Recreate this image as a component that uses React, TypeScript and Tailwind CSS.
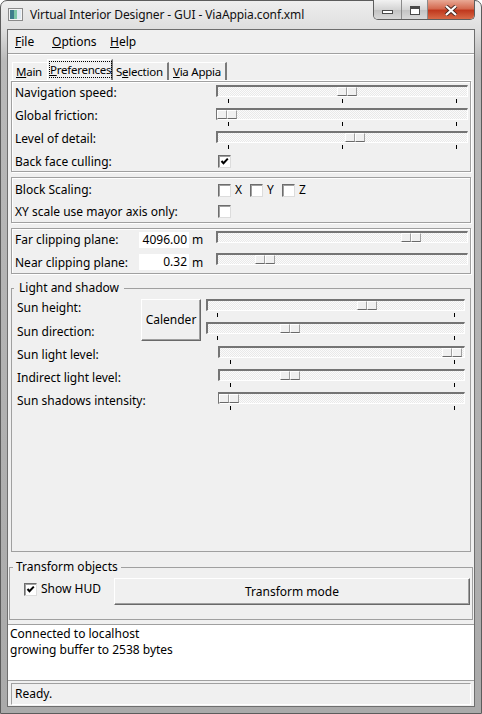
import React from "react";

const knob =
  "h-[9px] w-[10px] bg-[#f0f0f0] border border-t-white border-l-white border-b-[#696969] border-r-[#a0a0a0]";

type SliderProps = {
  w: string;
  thumb: string;
  ticks?: number;
  tickPad?: string;
  mt?: string;
};

function Slider({ w, thumb, ticks = 0, tickPad = "", mt = "mt-[2px]" }: SliderProps) {
  return (
    <div className={`${w} ${mt} shrink-0`}>
      <div className="flex h-[12px] border-t-2 border-l-2 border-b border-r border-t-[#747474] border-l-[#747474] border-b-white border-r-white bg-[conic-gradient(#fbfbfb_25%,#e9e9e9_0_50%,#fbfbfb_0_75%,#e9e9e9_0)] bg-[length:2px_2px]">
        <div className={`${thumb} flex shrink-0`}>
          <div className={knob} />
          <div className={knob} />
        </div>
      </div>
      {ticks > 0 && (
        <div className={`flex justify-between mt-[2px] ${tickPad}`}>
          {Array.from({ length: ticks }).map((_, i) => (
            <div key={i} className="w-px h-[4px] bg-black" />
          ))}
        </div>
      )}
    </div>
  );
}

function Check({ checked }: { checked?: boolean }) {
  return (
    <div className="w-[13px] h-[13px] shrink-0 bg-white border border-t-[#6d6d6d] border-l-[#6d6d6d] border-b-[#dcdcdc] border-r-[#dcdcdc] shadow-[inset_1px_1px_0_#a0a0a0] flex items-center justify-center">
      {checked && (
        <svg width="9" height="9" viewBox="0 0 9 9">
          <path d="M1.5 4 L3.5 6.2 L7.8 1.6" stroke="#000" strokeWidth="2" fill="none" />
        </svg>
      )}
    </div>
  );
}

const raised =
  "bg-[#f0f0f0] border border-t-white border-l-white border-b-[#696969] border-r-[#696969] shadow-[inset_-1px_-1px_0_#a0a0a0]";

const etched = "border border-[#a0a0a0] shadow-[inset_1px_1px_0_#fff,1px_1px_0_#fff]";

export default function App() {
  return (
    <div className="font-['Segoe_UI','Noto_Sans',sans-serif] text-[12px] text-black w-[482px] h-[714px] flex flex-col px-[6px] pb-[6px] rounded-t-[7px] border border-[#5c5c5c] bg-[linear-gradient(180deg,#eeeeee_0px,#dedede_29px,#b9b9b9_60px,#aaaaaa_100%)]">
      {/* title bar */}
      <div className="h-[28px] flex items-start shrink-0">
        <div className="flex items-center h-full">
          <svg width="15" height="13" viewBox="0 0 15 13" className="ml-[1px] -mt-[1px]">
            <rect x="0.5" y="0.5" width="14" height="12" fill="#f4f4f4" stroke="#8a8a8a" />
            <rect x="2" y="2" width="4" height="9" fill="#3f7d8c" />
            <rect x="6" y="2" width="3" height="9" fill="#7fc6a8" />
            <rect x="9" y="2" width="4" height="9" fill="#dfe9f2" />
          </svg>
          <span className="ml-[7px] -mt-[1px] text-[#111] tracking-[-0.1px]">Virtual Interior Designer - GUI - ViaAppia.conf.xml</span>
        </div>
        <div className="ml-auto flex h-[20px] -mt-px border border-t-0 border-[#5e5e5e] rounded-b-[5px] overflow-hidden">
          <div className="w-[28px] flex items-center justify-center bg-[linear-gradient(180deg,#f2f2f2,#d4d4d4_50%,#c2c2c2_51%,#d8d8d8)] border-r border-[#8a8a8a]">
            <div className="w-[11px] h-[4px] mt-[4px] bg-white border border-[#4a4a4a]" />
          </div>
          <div className="w-[26px] flex items-center justify-center bg-[linear-gradient(180deg,#f2f2f2,#d4d4d4_50%,#c2c2c2_51%,#d8d8d8)] border-r border-[#8a8a8a]">
            <div className="w-[10px] h-[9px] bg-white border border-[#4a4a4a] border-t-[3px] mt-[1px]" />
          </div>
          <div className="w-[46px] flex items-center justify-center bg-[linear-gradient(180deg,#e9a995,#d46a50_45%,#c0391e_55%,#d86a47)]">
            <svg width="14" height="11" viewBox="0 0 14 11" className="mt-[1px]">
              <path d="M2 1 L12 10 M12 1 L2 10" stroke="#4a2a22" strokeWidth="4" />
              <path d="M2 1 L12 10 M12 1 L2 10" stroke="#fff" strokeWidth="2.2" />
            </svg>
          </div>
        </div>
      </div>

      {/* client area */}
      <div className="flex-1 flex flex-col bg-[#f0f0f0] border border-[#6e6e6e]">
        {/* menu */}
        <div className="h-[23px] flex items-center pl-[7px] shrink-0">
          <span className="w-[37px]"><u>F</u>ile</span>
          <span className="w-[58px]"><u>O</u>ptions</span>
          <span><u>H</u>elp</span>
        </div>
        <div className="h-[2px] border-t border-t-[#a0a0a0] border-b border-b-white shrink-0" />

        {/* tabs */}
        <div className="h-[25px] flex items-end pl-[4px] shrink-0 text-[11.5px] tracking-[-0.25px] whitespace-nowrap">
          <div className="w-[35px] h-[18px] flex items-center pl-[3px] border-t border-l border-t-white border-l-white">
            <span><u>M</u>ain</span>
          </div>
          <div className="w-[66px] h-[21px] pl-px pt-[1px] border-t border-l border-r-2 border-t-white border-l-white border-r-[#7a7a7a] bg-[#f0f0f0]">
            <span className="border border-dotted border-black leading-[15px] inline-block"><u>P</u>references</span>
          </div>
          <div className="w-[56px] h-[18px] flex items-center pl-[3px] border-t border-r-2 border-t-white border-r-[#7a7a7a]">
            <span>S<u>e</u>lection</span>
          </div>
          <div className="w-[58px] h-[18px] flex items-center pl-[4px] border-t border-r-2 border-t-white border-r-[#7a7a7a]">
            <span><u>V</u>ia Appia</span>
          </div>
        </div>

        {/* tab panel */}
        <div className="h-[475px] mx-[2px] px-[1px] border-t border-t-white flex flex-col shrink-0">
          {/* group 1 */}
          <div className={`${etched} h-[91px] pt-[1px] flex flex-col shrink-0`}>
            <div className="h-[23px] flex items-start">
              <span className="w-[204px] pl-[3px] mt-[2px] leading-[16px]">Navigation speed:</span>
              <Slider w="w-[252px]" thumb="ml-[119px]" ticks={3} tickPad="pl-[12px] pr-[11px]" mt="mt-[2px]" />
            </div>
            <div className="h-[23px] flex items-start">
              <span className="w-[204px] pl-[3px] mt-[2px] leading-[16px]">Global friction:</span>
              <Slider w="w-[252px]" thumb="-ml-px" ticks={3} tickPad="pl-[12px] pr-[11px]" mt="mt-[2px]" />
            </div>
            <div className="h-[23px] flex items-start">
              <span className="w-[204px] pl-[3px] mt-[2px] leading-[16px]">Level of detail:</span>
              <Slider w="w-[252px]" thumb="ml-[127px]" ticks={3} tickPad="pl-[12px] pr-[11px]" mt="mt-[2px]" />
            </div>
            <div className="h-[19px] flex items-center">
              <span className="w-[206px] pl-[3px] leading-[16px]">Back face culling:</span>
              <Check checked />
            </div>
          </div>

          {/* group 2 */}
          <div className={`${etched} mt-[5px] h-[46px] pt-[1px] flex flex-col shrink-0`}>
            <div className="h-[22px] flex items-center">
              <span className="w-[206px] pl-[3px]">Block Scaling:</span>
              <Check />
              <span className="ml-[4px] w-[15px]">X</span>
              <Check />
              <span className="ml-[4px] w-[15px]">Y</span>
              <Check />
              <span className="ml-[4px]">Z</span>
            </div>
            <div className="h-[21px] flex items-center">
              <span className="w-[206px] pl-[3px]">XY scale use mayor axis only:</span>
              <Check />
            </div>
          </div>

          {/* group 3 */}
          <div className={`${etched} mt-[5px] h-[46px] flex flex-col shrink-0`}>
            <div className="h-[22px] flex items-start">
              <span className="w-[127px] pl-[3px] mt-[3px] leading-[16px]">Far clipping plane:</span>
              <span className="w-[50px] h-[16px] mt-[3px] bg-white text-right pr-[2px] leading-[16px]">4096.00</span>
              <span className="w-[27px] pl-[3px] mt-[3px] leading-[16px]">m</span>
              <Slider w="w-[252px]" thumb="ml-[183px]" mt="mt-[2px]" />
            </div>
            <div className="h-[22px] flex items-start">
              <span className="w-[127px] pl-[3px] mt-[4px] leading-[16px]">Near clipping plane:</span>
              <span className="w-[50px] h-[16px] mt-[3px] bg-white text-right pr-[2px] leading-[16px]">0.32</span>
              <span className="w-[27px] pl-[3px] mt-[4px] leading-[16px]">m</span>
              <Slider w="w-[252px]" thumb="ml-[37px]" mt="mt-[2px]" />
            </div>
          </div>

          {/* group 4 */}
          <fieldset className="mt-[6px] h-[272px] border border-[#a0a0a0] shrink-0">
            <legend className="ml-[2px] px-[5px] leading-[16px]">Light and shadow</legend>
            <div className="pt-[2px] pl-[5px] flex flex-col">
              <div className="flex h-[46px]">
                <div className="w-[124px] flex flex-col">
                  <span className="h-[23px] pt-[2px] leading-[16px]">Sun height:</span>
                  <span className="h-[23px] pt-[3px] leading-[16px]">Sun direction:</span>
                </div>
                <div className={`${raised} w-[60px] h-[42px] mt-[1px] flex items-center justify-center`}>
                  Calender
                </div>
                <div className="ml-[5px] flex flex-col">
                  <div className="h-[23px]">
                    <Slider w="w-[259px]" thumb="ml-[149px]" ticks={2} tickPad="pl-[11px] pr-[10px]" mt="mt-[1px]" />
                  </div>
                  <div className="h-[23px]">
                    <Slider w="w-[259px]" thumb="ml-[72px]" ticks={2} tickPad="pl-[11px] pr-[10px]" mt="mt-[1px]" />
                  </div>
                </div>
              </div>
              <div className="flex h-[23px] items-start">
                <span className="w-[201px] mt-[3px] leading-[16px]">Sun light level:</span>
                <Slider w="w-[247px]" thumb="ml-[222px]" ticks={2} tickPad="pl-[12px] pr-[10px]" mt="mt-[2px]" />
              </div>
              <div className="flex h-[23px] items-start">
                <span className="w-[201px] mt-[3px] leading-[16px]">Indirect light level:</span>
                <Slider w="w-[247px]" thumb="ml-[60px]" ticks={2} tickPad="pl-[12px] pr-[10px]" mt="mt-[2px]" />
              </div>
              <div className="flex h-[23px] items-start">
                <span className="w-[201px] mt-[3px] leading-[16px]">Sun shadows intensity:</span>
                <Slider w="w-[247px]" thumb="-ml-px" ticks={2} tickPad="pl-[12px] pr-[10px]" mt="mt-[2px]" />
              </div>
            </div>
          </fieldset>
        </div>

        {/* transform objects */}
        <fieldset className="mx-px mt-[4px] h-[61px] border border-[#a0a0a0] shrink-0">
          <legend className="ml-[3px] px-[3px] leading-[16px]">Transform objects</legend>
          <div className="flex items-start pl-[14px]">
            <div className="flex items-center mt-[7px]">
              <Check checked />
              <span className="ml-[4px] leading-[14px]">Show HUD</span>
            </div>
            <div className={`${raised} ml-auto mr-[2px] w-[356px] h-[27px] mt-[3px] flex items-center justify-center`}>
              Transform mode
            </div>
          </div>
        </fieldset>

        {/* log */}
        <div className="mt-[4px] h-[56px] bg-white border-t border-[#a0a0a0] pl-[2px] pt-[1px] leading-[16px] shrink-0">
          <div>Connected to localhost</div>
          <div>growing buffer to 2538 bytes</div>
        </div>

        {/* status */}
        <div className="flex-1 flex items-center px-[3px] border-t border-[#a0a0a0]">
          <div className="w-full h-[22px] flex items-center pl-[3px] border border-t-[#a0a0a0] border-l-[#a0a0a0] border-b-white border-r-white">
            Ready.
          </div>
        </div>
      </div>
    </div>
  );
}
